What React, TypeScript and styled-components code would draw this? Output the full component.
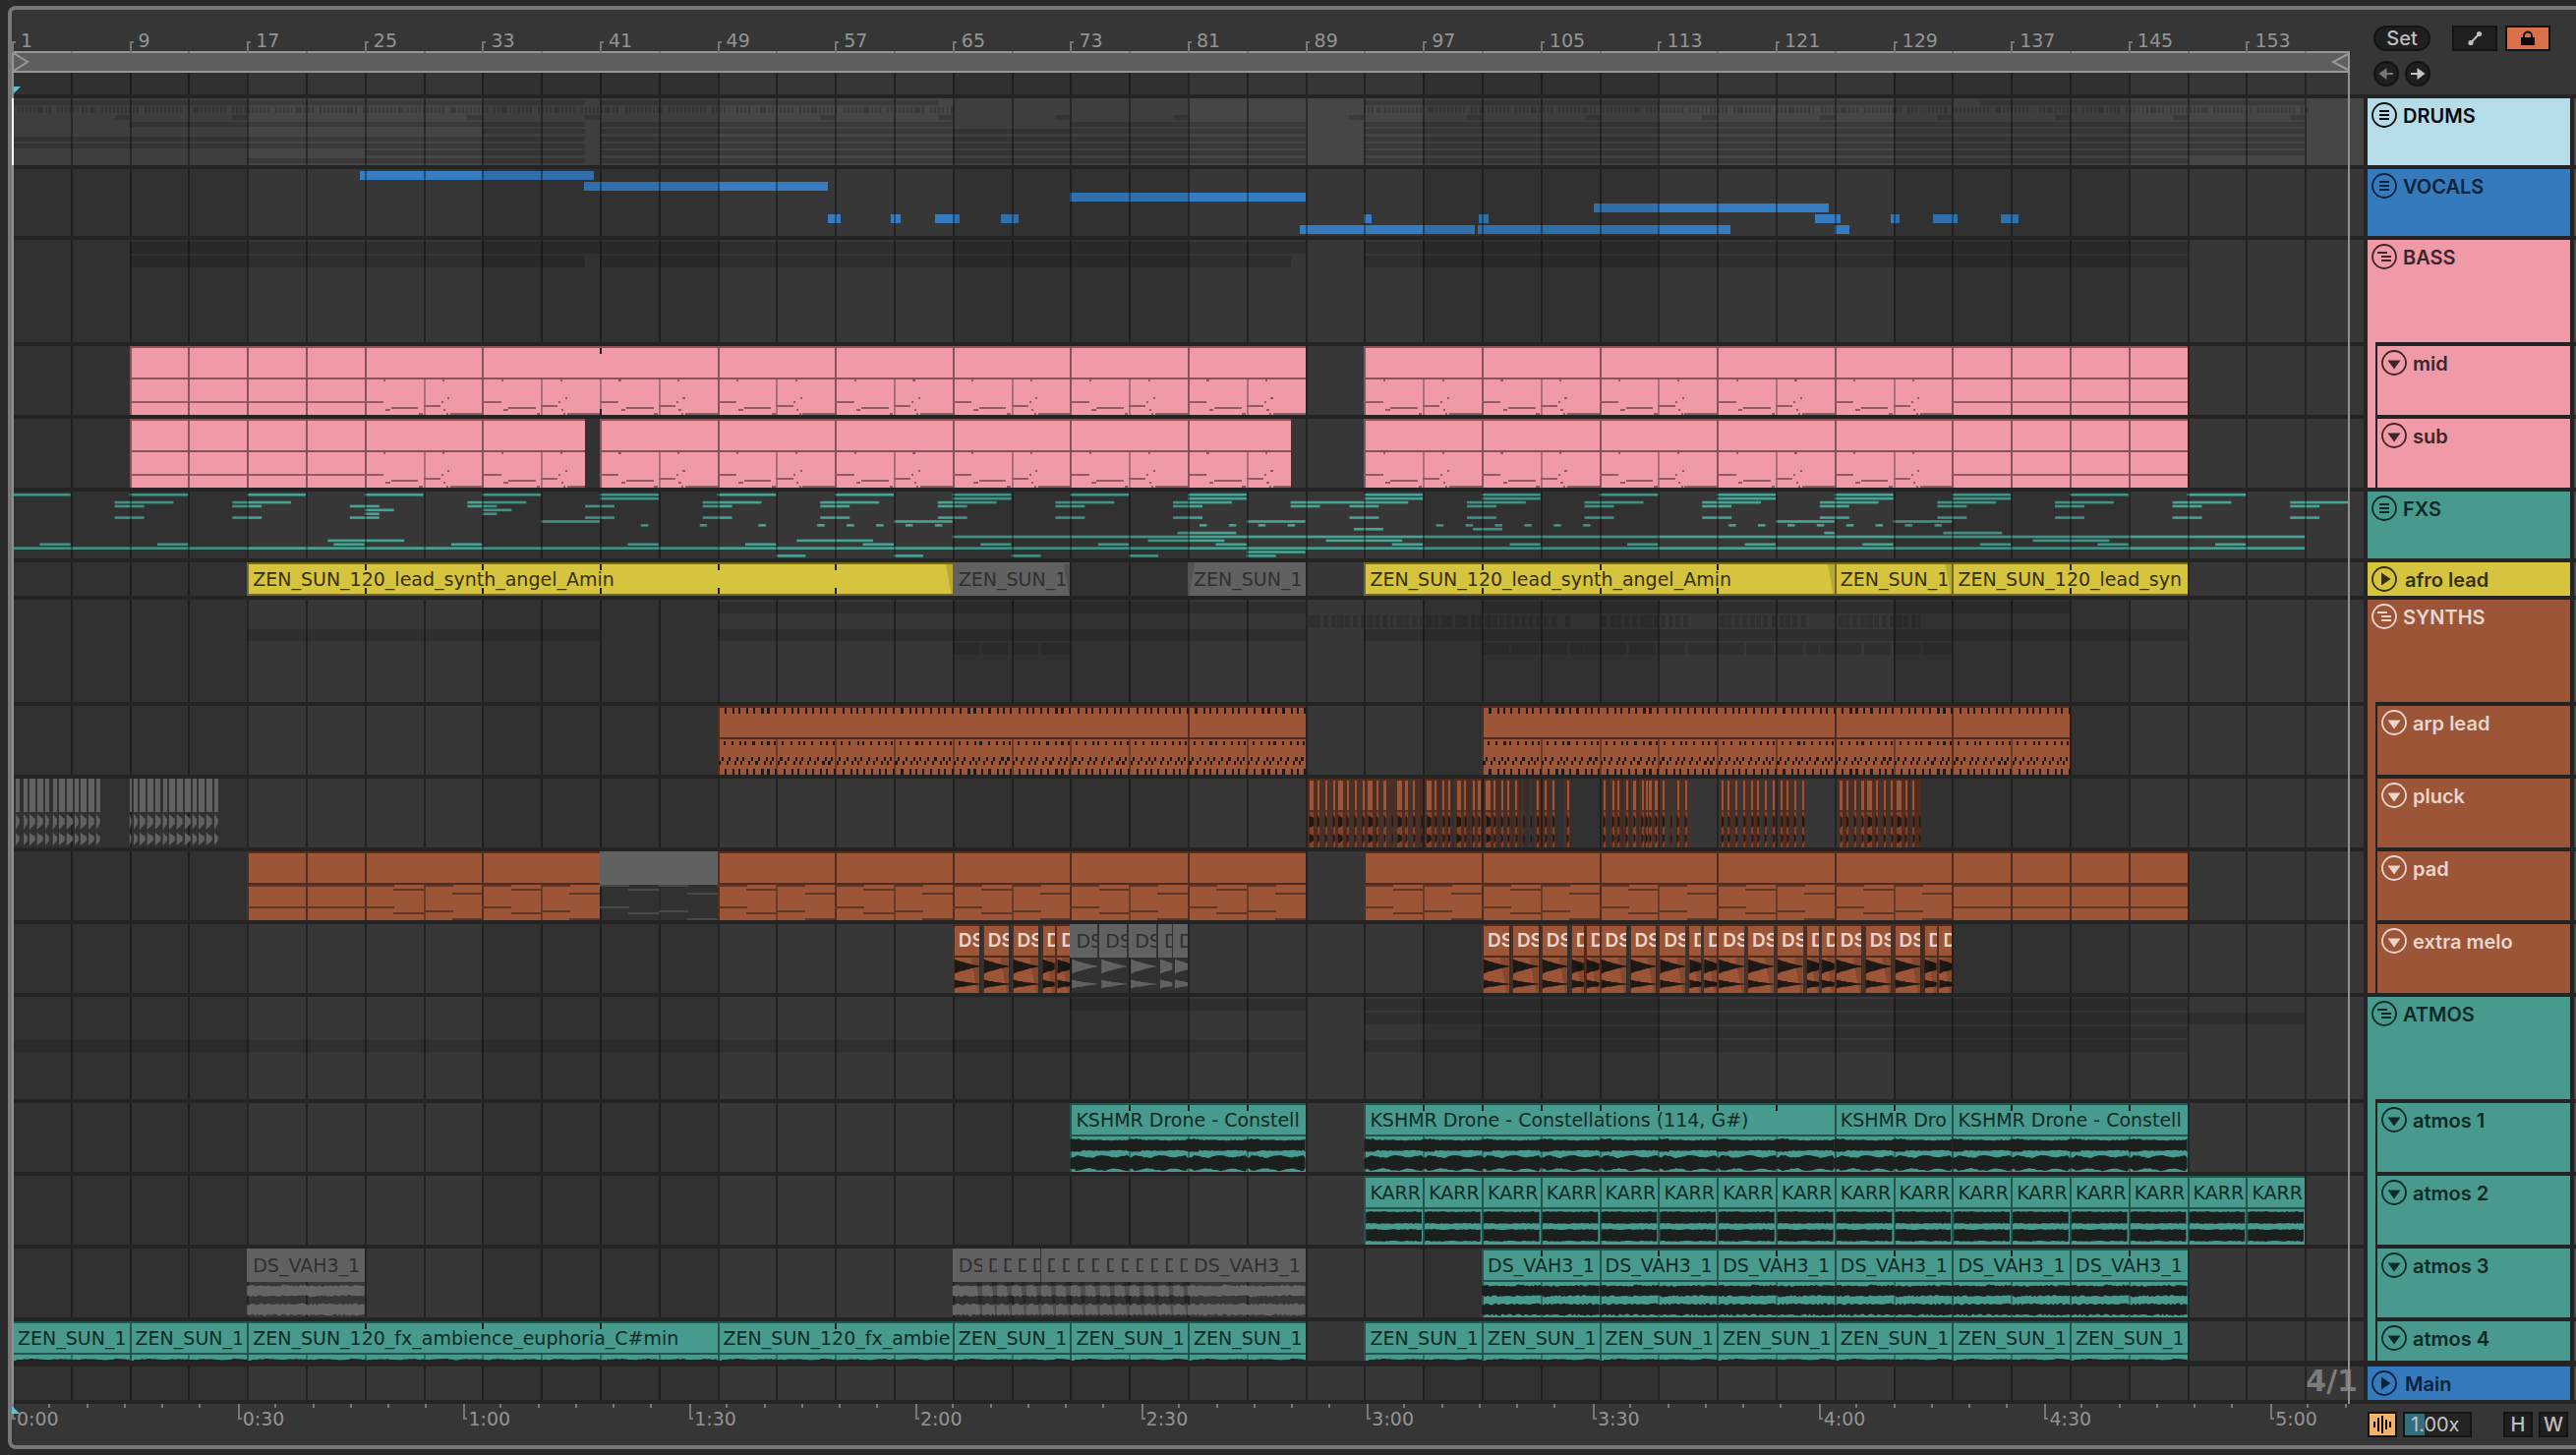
import React from 'react';
import styled, { createGlobalStyle } from 'styled-components';

const BARS = 160;
const PX = 1 / 14.95;
const FONT = '"Inter", "Liberation Sans", sans-serif';
const LABEL_FONT = '"DejaVu Sans", "Liberation Sans", sans-serif';
const pct = (bars: number) => `${(bars / BARS) * 100}%`;

type Range = [number, number];
type Tone = { fill: string; edge: string; ink: string; note: string; split: string };

const tones: Record<string, Tone> = {
  ice: { fill: '#b6dce7', edge: '#5f7880', ink: '#060a0c', note: '#333', split: '#777' },
  blue: { fill: '#357abd', edge: '#1c4268', ink: '#08233a', note: '#333', split: '#777' },
  pink: { fill: '#f09aa7', edge: '#855359', ink: '#3e2529', note: '#935c65', split: '#ac6d77' },
  teal: { fill: '#479a8d', edge: '#23554d', ink: '#0f2a26', note: '#1b201f', split: '#2f6c63' },
  gold: { fill: '#d6c43f', edge: '#74691f', ink: '#35300e', note: '#222', split: '#222' },
  rust: { fill: '#9c5537', edge: '#522c1e', ink: '#ead6cd', note: '#1f1916', split: '#6d3a26' },
};

type Clip = { from: number; to: number; label?: string; muted?: boolean; marks?: number[]; foot?: boolean; fadeIn?: boolean; fadeOut?: boolean };
type Kind = 'drums' | 'vocals' | 'bass' | 'fx' | 'synths' | 'atmos' | 'bassline' | 'arp' | 'pluck' | 'pad' | 'melo' | 'audio' | 'empty';
type Track = { name: string; tone: string; height: number; gap?: number; nested?: boolean; icon: 'lines' | 'group' | 'down' | 'play'; kind: Kind; clips?: Clip[]; wave?: 'drone' | 'karra' | 'vah' | 'thin' };

const span = (from: number, to: number, step: number, rest: Partial<Clip> = {}): Clip[] => {
  const out: Clip[] = [];
  for (let b = from; b < to; b += step) out.push({ ...rest, from: b, to: Math.min(b + step, to) });
  return out;
};
const every = (from: number, to: number, step: number) => {
  const out: number[] = [];
  for (let b = from; b < to; b += step) out.push(b);
  return out;
};

const LEAD = 'ZEN_SUN_120_lead_synth_angel_Amin';
const FX = 'ZEN_SUN_120_fx_ambience_euphoria_C#min';
const DRONE = 'KSHMR Drone - Constellations (114, G#)';
const DRONE_SHORT = 'KSHMR Drone - Constell';
const VAH = 'DS_VAH3_1';
const ZEN = 'ZEN_SUN_1';

const meloPhrase = (at: number, muted = false): Clip[] =>
  ([[0, 1.85], [2, 3.85], [4, 5.85], [6, 6.95], [7, 8]] as Range[]).map(([a, b]) => ({ from: at + a, to: at + b, label: a < 6 ? 'DS' : 'D', muted }));

const tracks: Track[] = [
  { name: 'DRUMS', tone: 'ice', height: 68, icon: 'lines', kind: 'drums' },
  { name: 'VOCALS', tone: 'blue', height: 68, icon: 'lines', kind: 'vocals' },
  { name: 'BASS', tone: 'pink', height: 104, icon: 'group', kind: 'bass' },
  {
    name: 'mid', tone: 'pink', height: 70, nested: true, icon: 'down', kind: 'bassline',
    clips: [...span(8, 24, 4), { from: 24, to: 32 }, { from: 32, to: 48, marks: [40], foot: true }, ...span(48, 88, 8), ...span(92, 132, 8), ...span(132, 148, 4)],
  },
  {
    name: 'sub', tone: 'pink', height: 70, nested: true, icon: 'down', kind: 'bassline',
    clips: [...span(8, 24, 4), { from: 24, to: 32 }, { from: 32, to: 39 }, ...span(40, 87, 8), ...span(92, 132, 8), ...span(132, 148, 4)],
  },
  { name: 'FXS', tone: 'teal', height: 68, icon: 'lines', kind: 'fx' },
  {
    name: 'afro lead', tone: 'gold', height: 34, icon: 'play', kind: 'empty',
    clips: [
      { from: 16, to: 64, label: LEAD, marks: [24, 32, 40, 48, 56], foot: true, fadeOut: true },
      { from: 64, to: 72, label: ZEN, muted: true, fadeOut: true },
      { from: 80, to: 88, label: ZEN, muted: true, fadeIn: true },
      { from: 92, to: 124, label: LEAD, marks: [100, 108, 116], foot: true, fadeOut: true },
      { from: 124, to: 132, label: ZEN, fadeOut: true },
      { from: 132, to: 148, label: 'ZEN_SUN_120_lead_syn', marks: [140], foot: true },
    ],
  },
  { name: 'SYNTHS', tone: 'rust', height: 104, icon: 'group', kind: 'synths' },
  {
    name: 'arp lead', tone: 'rust', height: 70, nested: true, icon: 'down', kind: 'arp',
    clips: [{ from: 48, to: 80 }, { from: 80, to: 88 }, { from: 100, to: 124 }, { from: 124, to: 132 }, { from: 132, to: 140 }],
  },
  { name: 'pluck', tone: 'rust', height: 70, nested: true, icon: 'down', kind: 'pluck' },
  {
    name: 'pad', tone: 'rust', height: 70, nested: true, icon: 'down', kind: 'pad',
    clips: [...span(16, 24, 4), ...span(24, 40, 8), { from: 40, to: 48, muted: true }, ...span(48, 88, 8), ...span(92, 132, 8), ...span(132, 148, 4)],
  },
  {
    name: 'extra melo', tone: 'rust', height: 70, nested: true, icon: 'down', kind: 'melo',
    clips: [...meloPhrase(64), ...meloPhrase(72, true), ...[100, 108, 116, 124].flatMap((b) => meloPhrase(b))],
  },
  { name: 'ATMOS', tone: 'teal', height: 104, icon: 'group', kind: 'atmos' },
  {
    name: 'atmos 1', tone: 'teal', height: 70, nested: true, icon: 'down', kind: 'audio', wave: 'drone',
    clips: [
      { from: 72, to: 88, label: DRONE_SHORT, marks: every(76, 88, 4) },
      { from: 92, to: 124, label: DRONE, marks: every(96, 124, 4) },
      { from: 124, to: 132, label: 'KSHMR Dro', marks: [128] },
      { from: 132, to: 148, label: DRONE_SHORT, marks: every(136, 148, 4) },
    ],
  },
  { name: 'atmos 2', tone: 'teal', height: 70, nested: true, icon: 'down', kind: 'audio', wave: 'karra', clips: span(92, 156, 4, { label: 'KARR' }) },
  {
    name: 'atmos 3', tone: 'teal', height: 70, nested: true, icon: 'down', kind: 'audio', wave: 'vah',
    clips: [
      { from: 16, to: 24, label: VAH, muted: true },
      { from: 64, to: 66, label: 'DS', muted: true },
      ...span(66, 80, 1, { label: 'D', muted: true }),
      { from: 80, to: 88, label: VAH, muted: true },
      ...every(100, 148, 8).map((b) => ({ from: b, to: b + 8, label: VAH, marks: [b + 4] })),
    ],
  },
  {
    name: 'atmos 4', tone: 'teal', height: 40, nested: true, icon: 'down', kind: 'audio', wave: 'thin',
    clips: [
      ...span(0, 16, 8, { label: ZEN }),
      { from: 16, to: 48, label: FX, marks: [24, 32, 40] },
      { from: 48, to: 64, label: 'ZEN_SUN_120_fx_ambie', marks: [56] },
      ...span(64, 88, 8, { label: ZEN }),
      ...span(92, 148, 8, { label: ZEN }),
    ],
  },
  { name: 'Main', tone: 'blue', height: 34, gap: 6, icon: 'play', kind: 'empty' },
];

/* ---------- overview data for folded groups ---------- */

const drumRows: Range[][] = [
  [[0, 39], [40, 63], [92, 132], [134, 156]],
  [],
  [7, 15, 31, 39, 55, 63, 71, 79, 91, 99, 107, 115, 123, 131, 139, 147, 155].map((b) => [b, b + 1] as Range),
  [[8, 39], [40, 64], [72, 88], [92, 156]],
  [[32, 39], [40, 88], [92, 156]],
  [[0, 39], [40, 88], [92, 156]],
  [[0, 39], [40, 88], [92, 156]],
  [[24, 39], [40, 88], [92, 156]],
  [[16, 39], [40, 88], [92, 148]],
];

const vocalRows: Range[][] = [
  [[23.7, 39.6]],
  [[38.9, 55.5]],
  [[72, 88]],
  [[107.6, 123.6]],
  [[55.5, 56.4], [59.8, 60.5], [62.8, 64.5], [67.3, 68.5], [92, 92.5], [99.8, 100.5], [122.7, 124.4], [127.8, 128.4], [130.7, 132.4], [135.3, 136.5]],
  [[87.6, 99.5], [99.7, 116.9], [124, 125]],
];

const starts = (list: number[], len: number): Range[] => list.map((b) => [b, b + len]);

const fxRows: Range[][] = [
  starts([0, 8, 16, 24, 32, 40, 48, 56, 64, 72, 80, 92, 100, 108, 116, 124, 132, 140, 148], 4),
  starts([40, 64, 80, 92, 100, 116, 124, 132], 4),
  [...starts([7, 15, 31, 47, 55, 63, 71, 79, 99, 107, 115, 123, 131, 139, 147, 155], 4), [87, 95]],
  starts([7, 15, 23, 31, 39, 47, 55, 63, 71, 79, 87, 91, 99, 107, 115, 123, 131, 139, 147, 155], 2),
  starts([24, 32], 2),
  starts([24, 32], 1),
  starts([7, 15, 23, 39, 47, 55, 63, 71, 79, 91, 99, 107, 115, 123, 131, 139, 147, 155], 2),
  starts([36, 60, 84, 120, 128], 4),
  starts([42.8, 46.8, 50.8, 54.8, 56.8, 58.8, 60.8, 62.8, 80.8, 82.8, 84.8, 86.8, 96.9, 98.9, 100.9, 102.9, 104.9, 106.9, 116.8, 118.8, 120.8, 122.8, 124.8, 126.8, 128.8, 130.8], 0.5),
  starts([91.3, 99.4], 2),
  [[79.3, 83.3], [123.3, 124], [131.4, 135.4]],
  [[64, 156]],
  starts([21.5, 53.4, 77.3, 89.4, 137.5], 5.2),
  starts([1.9, 9.9, 21.9, 29.9, 41.9, 49.9, 57.9, 65.9, 73.9, 81.9, 93.9, 101.9, 109.9, 117.9, 125.9, 133.9, 141.9, 149.9], 2.1),
  [[0, 156]],
  [[84, 88]],
  starts([52, 60, 68, 76, 84], 2),
];

const wide = 0.3;
const thin = 0.14;
type Hit = [number, number];
const pluckHits: Hit[] = [
  ...([[0.15, wide], [0.69, thin], [1.22, thin], [1.76, thin], [2.12, wide], [2.69, thin], [3.22, thin], [3.76, thin], [4.15, wide], [4.69, thin], [5.22, thin], [5.76, 0], [6.15, wide], [6.69, thin], [7.22, thin], [7.76, 0], [8.15, wide], [8.69, thin], [9.22, thin], [9.6, thin], [10.18, wide], [10.7, thin], [11.25, thin], [11.64, thin], [12.18, wide], [12.7, thin], [13.2, thin], [13.64, thin], [14.18, thin], [14.7, 0], [15.2, 0], [15.64, thin], [16.18, thin], [16.7, thin], [17.67, thin]] as Hit[]).map(([b, w]) => [88.12 + b, w] as Hit),
  ...([0.27, 0.87, 1.25, 1.8, 2.33, 2.87, 3.15, 3.4, 3.8, 4.3, 4.85, 5.28, 5.82]).map((b) => [108 + b, b === 4.85 ? 0 : thin] as Hit),
  ...([0.27, 0.69, 1.22, 1.76, 2.3, 2.69, 3.2, 3.76, 4.3, 4.7, 5.2, 5.76]).map((b) => [116.05 + b, thin] as Hit),
  ...([[0.33, thin], [0.75, thin], [1.28, thin], [1.8, thin], [2.2, wide], [2.75, thin], [3.3, thin], [3.8, thin], [4.2, wide], [4.75, thin], [5.27, thin], [5.7, 0]] as Hit[]).map(([b, w]) => [124.05 + b, w] as Hit),
];
const mutedPlucks = ([
  [0.13, 0.39], [0.68, 0.94], [1.07, 1.46], [1.59, 2], [2.14, 2.4], [2.66, 2.95], [3.08, 3.47], [3.6, 4.02], [4.15, 4.41], [4.54, 4.96], [5.09, 5.48], [5.61, 5.87],
  [7.88, 8], [8.17, 8.43], [8.56, 8.95], [9.08, 9.5], [9.63, 10], [10.15, 10.44], [10.57, 10.96], [11.09, 11.5], [11.64, 12.03], [12.16, 12.45], [12.58, 12.97], [13.1, 13.5], [13.65, 13.9],
] as Range[]).map(([a, b]): Range => [a + 0.13, b + 0.13]);

/* ---------- wave forms ---------- */

const noise = (n: number) => {
  const s = Math.sin(n * 127.1 + 11.7) * 43758.5453;
  return s - Math.floor(s);
};

const wavePath = (from: number, to: number, mid: number, amp: (t: number, i: number) => number, step = 0.14) => {
  const up: string[] = [];
  const down: string[] = [];
  const n = Math.max(2, Math.round((to - from) / step));
  for (let i = 0; i <= n; i += 1) {
    const x = (from + ((to - from) * i) / n).toFixed(2);
    const t = ((to - from) * i) / n;
    up.push(`${x} ${(mid - amp(t, i)).toFixed(1)}`);
    down.unshift(`${x} ${(mid + amp(t, i + 500)).toFixed(1)}`);
  }
  return `M${up.join('L')}L${down.join('L')}Z`;
};

const audioWaves = (kind: Track['wave'], from: number, to: number) => {
  if (kind === 'drone')
    return (
      wavePath(from, to, 43, (t, i) => 4.6 + (t % 4 < 0.8 ? 1.2 : 0) + noise(i % 28) * 1.2) +
      wavePath(from, to, 61, (t, i) => 6 + Math.sin((t % 4) * 3.6) * 1.2 + (t % 4 < 0.3 ? -1.5 : 0) + noise((i % 28) + 70) * 1.2)
    );
  if (kind === 'karra')
    return wavePath(from + 0.12, to - 0.08, 42.5, (_, i) => 5.4 + noise((i % 28) + 5)) + wavePath(from + 0.12, to - 0.08, 60.5, (_, i) => 5.4 + noise((i % 28) + 90));
  if (kind === 'thin') return wavePath(from + 0.3, to, 41, (t, i) => 1.3 + Math.abs(Math.sin(t * 1.57)) * 0.9 + noise(i) * 0.8);
  return wavePath(from, to, 43, (_, i) => 4.2 + noise((i % 57) + 31) * 2.2) + wavePath(from, to, 62, (_, i) => 4.4 + noise((i % 57) + 140) * 2.2);
};

/* ---------- styles ---------- */

const Global = createGlobalStyle`
  *, *::before, *::after { box-sizing: border-box; }
  body { margin: 0; background: #2a2a2a; font-family: ${FONT}; }
  button, input { font: inherit; }
`;

const Page = styled.main`
  min-height: 100vh;
  padding: 6px 0 6px 8px;
  background: #2a2a2a;
`;
const Frame = styled.div`
  display: flex;
  border: 4px solid #777;
  border-right: 0;
  border-radius: 8px 0 0 8px;
  background: #363636;
  overflow: hidden;
`;
const Arrangement = styled.section`
  position: relative;
  flex: 1;
  min-width: 0;
`;
const Side = styled.aside`
  width: 216px;
  flex: none;
`;

const BarRuler = styled.div`
  display: grid;
  grid-template-columns: repeat(20, 1fr);
  height: 42px;
`;
const BarCell = styled.div`
  position: relative;
  padding: 18px 0 0 9px;
  color: #939393;
  font-family: ${LABEL_FONT};
  font-size: 19px;
  line-height: 26px;
  &::before {
    content: '';
    position: absolute;
    left: 0;
    bottom: 0;
    width: 4px;
    height: 12px;
    border-left: 2px solid #777;
    border-top: 2px solid #777;
  }
  &::after {
    content: '';
    position: absolute;
    left: 50%;
    bottom: 0;
    width: 2px;
    height: 2px;
    background: #777;
  }
`;
const Loop = styled.div`
  display: flex;
  justify-content: space-between;
  width: ${pct(159.06)};
  height: 22px;
  border: 2px solid #979797;
  background: #5e5e5e;
  svg { width: 18px; height: 18px; }
`;
const LoopEdge = styled.div<{ $at: number }>`
  position: absolute;
  left: ${(p) => pct(p.$at)};
  top: 64px;
  bottom: 42px;
  width: 2px;
  background: #909090;
  z-index: 3;
`;
const Scrub = styled.div`
  position: relative;
  height: 22px;
`;
const Marker = styled.svg`
  position: absolute;
  left: 0;
  width: 10px;
  height: 8px;
  z-index: 4;
`;
const ScrubMarker = styled(Marker)`bottom: 0; left: 2px;`;
const TimeMarker = styled(Marker)`top: 2px;`;

const Lane = styled.div<{ $height: number; $gap: number; $lit?: boolean }>`
  position: relative;
  height: ${(p) => p.$height + p.$gap}px;
  border-top: ${(p) => p.$gap}px solid #242424;
  background: ${(p) => (p.$lit ? '#464646' : '#373737')};
`;
const Canvas = styled.svg`
  position: absolute;
  inset: 0;
  width: 100%;
  height: 100%;
  pointer-events: none;
`;
const Cursor = styled.div`
  position: absolute;
  left: 0;
  top: 0;
  bottom: 0;
  width: 2px;
  background: #fff;
  z-index: 4;
`;
const ClipBox = styled.div<{ $tone: Tone; $muted?: boolean }>`
  position: absolute;
  top: 0;
  bottom: 0;
  overflow: hidden;
  background: ${(p) => (p.$muted ? 'transparent' : p.$tone.fill)};
  border-left: ${(p) => (p.$muted ? '0' : `2px solid ${p.$tone.edge}`)};
`;
const ClipTitle = styled.div<{ $tone: Tone; $muted?: boolean; $bold?: boolean }>`
  height: 34px;
  padding-left: ${(p) => (p.$muted ? 6 : 4)}px;
  border: 2px solid ${(p) => (p.$muted ? '#616161' : p.$tone.edge)};
  border-width: 2px 0;
  background: ${(p) => (p.$muted ? '#616161' : p.$tone.fill)};
  color: ${(p) => (p.$muted ? '#2f2f2f' : p.$tone.ink)};
  font-family: ${(p) => (p.$bold ? FONT : LABEL_FONT)};
  font-size: 19px;
  font-weight: ${(p) => (p.$bold ? 600 : 400)};
  line-height: 30px;
  white-space: nowrap;
  overflow: hidden;
`;
const Position = styled.output`
  position: absolute;
  right: 6px;
  bottom: 48px;
  color: #7b7b7b;
  font-family: ${LABEL_FONT};
  font-size: 30px;
  font-weight: 700;
  line-height: 34px;
  z-index: 2;
`;

const TimeRuler = styled.div`
  position: relative;
  display: flex;
  height: 42px;
  overflow: hidden;
`;
const TimeCell = styled.div`
  position: relative;
  flex: none;
  width: ${pct(15.366)};
  padding: 2px 0 0 5px;
  color: #939393;
  font-family: ${LABEL_FONT};
  font-size: 19px;
  line-height: 26px;
`;
const BaseLine = styled.div`
  height: 4px;
  background: #242424;
`;

const Tools = styled.div`
  display: grid;
  grid-template-columns: 58px 100px;
  grid-template-rows: 26px 26px;
  column-gap: 22px;
  row-gap: 10px;
  height: 86px;
  padding: 16px 0 0 10px;
`;
const Pair = styled.div`
  display: flex;
  gap: 8px;
`;
const Arrows = styled.div`
  display: flex;
  gap: 6px;
`;
const Tool = styled.button<{ $width: number; $round?: boolean; $fill?: string }>`
  display: flex;
  align-items: center;
  justify-content: center;
  flex: none;
  width: ${(p) => p.$width}px;
  height: 26px;
  padding: 0;
  border: 2px solid #131313;
  border-radius: ${(p) => (p.$round ? 13 : 0)}px;
  background: ${(p) => p.$fill ?? '#1f1f1f'};
  color: #bdbdbd;
  font-size: 20px;
  font-weight: 500;
  line-height: 22px;
`;

const HeaderRow = styled.div<{ $height: number; $gap: number }>`
  display: flex;
  height: ${(p) => p.$height + p.$gap}px;
  padding-left: 4px;
  background: #242424;
`;
const Strip = styled.div<{ $tone: Tone }>`
  width: 10px;
  border-right: 2px solid #242424;
  background: ${(p) => p.$tone.fill};
`;
const Header = styled.div<{ $tone: Tone; $gap: number; $wideGap?: boolean }>`
  display: flex;
  align-items: flex-start;
  gap: ${(p) => (p.$wideGap ? 8 : 6)}px;
  flex: 1;
  margin-top: ${(p) => p.$gap}px;
  padding: 4px;
  background: ${(p) => p.$tone.fill};
  color: ${(p) => p.$tone.ink};
  font-size: 20px;
  font-weight: 600;
  line-height: 28px;
`;
const Next = styled.div<{ $gap: number }>`
  width: 2px;
  margin: ${(p) => p.$gap}px 0 0 4px;
  background: #464646;
`;
const Fold = styled.button`
  width: 26px;
  height: 26px;
  flex: none;
  padding: 0;
  border: 0;
  background: none;
  color: inherit;
  svg { display: block; width: 26px; height: 26px; }
`;

const Status = styled.div`
  display: flex;
  align-items: flex-start;
  height: 42px;
  padding: 8px 8px 0 4px;
`;
const Speed = styled.label`
  display: flex;
  width: 70px;
  height: 26px;
  margin: 0 32px 0 6px;
  border: 2px solid #131313;
  background: linear-gradient(to right, #336f7e 20px, #242424 20px);
  input {
    width: 100%;
    padding: 0 0 0 6px;
    border: 0;
    outline: 0;
    background: none;
    color: #c4c4c4;
    font-size: 20px;
    line-height: 22px;
  }
`;
const Gap = styled.span`width: 6px;`;

/* ---------- drawings ---------- */

const FoldIcon = ({ kind }: { kind: Track['icon'] }) => (
  <svg viewBox="0 0 26 26" fill="none" stroke="currentColor" strokeWidth="2" aria-hidden="true">
    <circle cx="13" cy="13" r="12" strokeWidth="1.8" />
    {kind === 'lines' && <path d="M8 9h10M8 13h10M8 17h10" />}
    {kind === 'group' && <path d="M6 9h10M10 13h10M10 17h10" />}
    {kind === 'down' && <path d="M6.5 10.5h13L13 19.5z" fill="currentColor" stroke="none" />}
    {kind === 'play' && <path d="M10 6.5v13L19.5 13z" fill="currentColor" stroke="none" />}
  </svg>
);

const gridLines = every(4, 160, 4).map((b) => `M${(b + PX).toFixed(3)} 0V1`).join('');
const Grid = () => (
  <Canvas viewBox="0 0 160 1" preserveAspectRatio="none" shapeRendering="crispEdges" aria-hidden="true">
    {every(0, 160, 32).map((b) => (
      <rect key={b} x={b} y="0" width="16" height="1" fill="#000" opacity="0.1" />
    ))}
    <path d={gridLines} stroke="#000" strokeOpacity="0.36" strokeWidth="2" vectorEffect="non-scaling-stroke" />
  </Canvas>
);

type RowsProps = { rows: Range[][]; top: number; pitch: number; size: number; fill: string; opacity?: number };
const Rows = ({ rows, top, pitch, size, fill, opacity = 1 }: RowsProps) => (
  <g fill={fill} opacity={opacity}>
    {rows.flatMap((row, r) => row.map(([a, b]) => <rect key={`${r}-${a}`} x={a} y={top + r * pitch} width={b - a} height={size} />))}
  </g>
);

const drumTicks = [...every(0.4, 64, 0.27), ...every(92, 156, 0.27)].map((b, i): Range => [b, b + (i % 13 === 5 ? 0.27 : 0.13)]).filter((_, i) => i % 11 !== 9);

const meloMap: Range[] = [64, 100, 108, 116, 124].flatMap((at) => meloPhrase(at).map((c): Range => [c.from, c.to]));

const Overview = ({ kind }: { kind: Kind }) => {
  if (kind === 'drums')
    return (
      <>
        <Rows rows={drumRows} top={2} pitch={7.35} size={5} fill="#000" opacity={0.16} />
        <Rows rows={[drumTicks]} top={9} pitch={0} size={6} fill="#000" opacity={0.16} />
      </>
    );
  if (kind === 'vocals') return <Rows rows={vocalRows} top={2} pitch={11} size={9} fill="#357cc0" />;
  if (kind === 'bass') return <Rows rows={[[[8, 88], [92, 148]], [[8, 39], [40, 87], [92, 148]]]} top={2} pitch={14} size={12} fill="#000" opacity={0.15} />;
  if (kind === 'fx') return <Rows rows={fxRows} top={2} pitch={3.88} size={2.6} fill="#49a395" />;
  if (kind === 'synths')
    return (
      <Rows
        rows={[[[48, 88], [100, 140]], pluckHits.map(([b, w]): Range => [b - 0.1, b + w + 0.1]), [[16, 40], [48, 88], [92, 148]], meloMap]}
        top={2} pitch={14} size={12} fill="#000" opacity={0.14}
      />
    );
  if (kind === 'atmos') return <Rows rows={[[[72, 88], [92, 148]], [[92, 156]], [[100, 148]], [[0, 88], [92, 148]]]} top={2} pitch={14} size={12} fill="#000" opacity={0.14} />;
  return null;
};

type Note = [number, number, number];
const bassNotes: Note[] = [[0, 1.3, 56], [1.3, 0.14, 34], [1.45, 0.3, 64], [1.8, 1.85, 62], [3.7, 0.25, 68], [4, 1.15, 60], [5.2, 0.14, 56], [5.3, 0.14, 34], [5.65, 0.14, 52], [5.38, 0.14, 64], [5.55, 0.14, 68], [5.8, 2.2, 68]];
const padNotes: Note[] = [[0, 2, 34], [0, 2, 56], [1.95, 2.05, 38], [1.95, 2.05, 62], [4, 2, 34], [4, 2, 60], [5.95, 2.05, 42], [5.95, 2.05, 68]];

const Phrase = ({ clip, notes, flat, color, split }: { clip: Clip; notes: Note[]; flat: number[]; color: string; split: string }) => {
  const length = clip.to - clip.from;
  if (length <= 4) return <>{flat.map((y) => <rect key={y} x={clip.from + 2 * PX} y={y} width={length - 2 * PX} height="2" fill={color} />)}</>;
  return (
    <>
      {every(clip.from, clip.to, 8).map((at) => (
        <g key={at} fill={color}>
          <rect x={at + 4} y="34" width={2 * PX} height="36" fill={split} />
          {at > clip.from && <rect x={at} y="34" width={2 * PX} height="36" fill={split} />}
          {notes.filter(([x]) => at + x < clip.to).map(([x, w, y]) => (
            <rect key={`${x}-${y}`} x={at + x} y={y} width={Math.min(w, clip.to - at - x)} height="2" />
          ))}
        </g>
      ))}
    </>
  );
};

const arpHead = [0.5, 1.05, 1.45, 1.95, 2.45, 3, 3.4, 3.92];
const arpTop = [0.4, 0.95, 1.5, 1.85, 2.4, 2.95, 3.4, 3.82];
const arpLow = [0.1, 0.6, 1.15, 1.55, 2.1, 2.6, 3.15, 3.55];
const tick = (b: number, y: number, h: number) => `M${b.toFixed(2)} ${y}h0.14v${h}h-0.14z`;
const arpPath = (from: number, to: number) =>
  every(from, to, 4)
    .map((at) => [
      ...arpHead.map((b) => tick(at + b, 2, 6) + tick(at + b, 64, 6)),
      ...arpTop.map((b) => tick(at + b, 36, 4)),
      ...arpLow.map((b) => tick(at + b, 56, 4) + tick(at + b + 0.17, 52, 4)),
    ].join(''))
    .join('');

const decay = (from: number, to: number) => {
  const amp = (peak: number) => (t: number, i: number) => Math.max(0.6, peak * Math.pow(Math.max(0, 1 - t / 1.75), 1.3) + noise(i) * 0.5);
  return wavePath(from + 2 * PX, to, 43, amp(7)) + wavePath(from + 2 * PX, to, 61, amp(4));
};

const Detail = ({ track }: { track: Track }) => {
  const tone = tones[track.tone];
  const clips = track.clips ?? [];
  const marks = clips.flatMap((c) => (c.marks ?? []).map((m) => ({ m, foot: c.foot })));
  return (
    <Canvas viewBox={`0 0 160 ${track.height}`} preserveAspectRatio="none" aria-hidden="true">
      <g shapeRendering="crispEdges">
        {track.kind === 'bassline' && clips.map((c) => <Phrase key={c.from} clip={c} notes={bassNotes} flat={[56]} color={tone.note} split={tone.split} />)}
        {track.kind === 'pad' &&
          clips.map((c) => <Phrase key={c.from} clip={c} notes={padNotes} flat={[34, 56]} color={c.muted ? '#484848' : '#633525'} split={c.muted ? '#282828' : tone.split} />)}
        {track.kind === 'arp' &&
          clips.map((c) => (
            <g key={c.from}>
              {every(c.from + 4, c.to, 4).map((b) => <rect key={b} x={b} y="34" width={2 * PX} height="36" fill={tone.split} />)}
              <path d={arpPath(c.from, c.to)} fill={tone.note} />
            </g>
          ))}
        {track.kind === 'pluck' && (
          <>
            {mutedPlucks.map(([a, b]) => <rect key={a} x={a} y="0" width={b - a} height="34" fill="#616161" />)}
            {pluckHits.map(([b, w]) => <rect key={b} x={b - 0.14} y="0" width={w + 0.22} height="70" fill={tone.edge} />)}
            {pluckHits.map(([b, w]) => (
              <g key={b}>
                <rect x={b} y="2" width={w} height="30" fill={tone.fill} />
                <rect x={b} y="34" width={w} height="36" fill="#84422a" />
              </g>
            ))}
          </>
        )}
        {track.kind === 'audio' &&
          clips.filter((c) => !c.muted).flatMap((c) => every(c.from + 4, c.to, 4).map((b) => <rect key={b} x={b} y="34" width={2 * PX} height={track.height - 34} fill={tone.split} />))}
      </g>
      {track.kind === 'pluck' && (
        <>
          {pluckHits.map(([b, w]) => (
            <path key={b} d={`M${b} 37l${w || 0.1} 3v8l-${w || 0.1} 2zM${b} 56l${w || 0.1} 2v5l-${w || 0.1} 3z`} fill={tone.note} />
          ))}
          {mutedPlucks.map(([a, b]) => (
            <path key={a} d={`M${a} 36L${b} 41V46L${a} 52zM${a} 55L${b} 59V63L${a} 68z`} fill="#616161" />
          ))}
        </>
      )}
      {track.kind === 'melo' && clips.map((c) => <path key={c.from} d={decay(c.from, c.to)} fill={c.muted ? '#616161' : tone.note} />)}
      {track.kind === 'melo' &&
        clips.filter((c) => !c.muted).map((c) => <path key={c.from} d={`M${c.to - 0.6} 34H${c.to}V70H${c.to - 0.15}z`} fill="#000" opacity="0.15" />)}
      {track.kind === 'audio' && clips.map((c) => <path key={c.from} d={audioWaves(track.wave, c.from, c.to)} fill={c.muted ? '#656565' : tone.note} />)}
      {track.wave === 'vah' &&
        clips.filter((c) => c.muted && c.to - c.from < 3).map((c) => <path key={c.from} d={`M${c.to - 0.35} 34H${c.to}V70H${c.to - 0.1}z`} fill="#000" opacity="0.22" />)}
      {clips.filter((c) => c.fadeOut).map((c) => <path key={c.from} d={`M${c.to - 0.45} 2H${c.to}V32H${c.to - 0.1}z`} fill="#000" opacity="0.14" />)}
      {clips.filter((c) => c.fadeIn).map((c) => <path key={c.from} d={`M${c.from} 0H${c.from + 0.5}L${c.from + 0.1} 34H${c.from}z`} fill="#000" opacity="0.14" />)}
      <g fill="#1d1d1b" shapeRendering="crispEdges">
        {marks.map(({ m, foot }) => (
          <React.Fragment key={m}>
            <rect x={m} y="2" width={2 * PX} height="6" />
            {foot && <rect x={m} y={track.height < 40 ? 26 : track.height - 6} width={2 * PX} height="6" />}
          </React.Fragment>
        ))}
      </g>
    </Canvas>
  );
};

const LaneView = ({ track }: { track: Track }) => (
  <Lane $height={track.height} $gap={track.gap ?? 4} $lit={track.kind === 'drums'}>
    <Canvas viewBox={`0 0 160 ${track.height}`} preserveAspectRatio="none" shapeRendering={track.kind === 'fx' ? 'auto' : 'crispEdges'} aria-hidden="true">
      <Overview kind={track.kind} />
    </Canvas>
    <Grid />
    {track.clips?.map((clip) => (
      <ClipBox key={clip.from} $tone={tones[track.tone]} $muted={clip.muted} style={{ left: pct(clip.from), width: pct(clip.to - clip.from) }}>
        <ClipTitle $tone={tones[track.tone]} $muted={clip.muted} $bold={track.tone === 'rust' && !clip.muted}>{clip.label}</ClipTitle>
      </ClipBox>
    ))}
    <Detail track={track} />
    {track.kind === 'drums' && <Cursor />}
  </Lane>
);

const timeLabel = (i: number) => `${Math.floor(i / 2)}:${i % 2 ? '30' : '00'}`;
const TimeTicks = () => (
  <Canvas viewBox="0 0 6 42" preserveAspectRatio="none" shapeRendering="crispEdges" aria-hidden="true">
    <path d="M1 0V4M2 0V4M3 0V4M4 0V4M5 0V4" stroke="#777" strokeWidth="2" vectorEffect="non-scaling-stroke" />
    <path d="M0.026 0V16M0 15H0.1" stroke="#777" strokeWidth="2" vectorEffect="non-scaling-stroke" />
  </Canvas>
);

export default function App() {
  return (
    <>
      <Global />
      <Page>
        <Frame>
          <Arrangement aria-label="Arrangement">
            <BarRuler>
              {every(1, 160, 8).map((bar) => <BarCell key={bar}>{bar}</BarCell>)}
            </BarRuler>
            <Loop>
              <svg viewBox="0 0 18 18" fill="none" stroke="#979797" strokeWidth="2" aria-hidden="true"><path d="M0 0L14 9L0 18" /></svg>
              <svg viewBox="0 0 18 18" fill="none" stroke="#979797" strokeWidth="2" aria-hidden="true"><path d="M18 1L3 9L18 17" /></svg>
            </Loop>
            <Scrub>
              <Grid />
              <ScrubMarker viewBox="0 0 10 8" aria-hidden="true"><path d="M0 0H7L0 7z" fill="#5ec3d6" /></ScrubMarker>
            </Scrub>
            {tracks.map((t) => <LaneView key={t.name} track={t} />)}
            <BaseLine />
            <TimeRuler>
              {every(0, 11, 1).map((i) => (
                <TimeCell key={i}>
                  <TimeTicks />
                  {timeLabel(i)}
                </TimeCell>
              ))}
              <TimeMarker viewBox="0 0 10 8" aria-hidden="true"><path d="M0 0L8 8H0z" fill="#5ec3d6" /></TimeMarker>
            </TimeRuler>
            <LoopEdge $at={0} />
            <LoopEdge $at={158.93} />
            <Position>4/1</Position>
          </Arrangement>
          <Side aria-label="Tracks">
            <Tools>
              <Tool type="button" $width={58} $round>Set</Tool>
              <Pair>
                <Tool type="button" $width={46} aria-label="Automation mode">
                  <svg width="18" height="18" viewBox="0 0 18 18" fill="#bdbdbd" stroke="#bdbdbd" aria-hidden="true">
                    <circle cx="5" cy="13.5" r="2.6" stroke="none" />
                    <circle cx="13.5" cy="4.5" r="2.6" stroke="none" />
                    <path d="M5 13.5L13.5 4.5" strokeWidth="2" />
                  </svg>
                </Tool>
                <Tool type="button" $width={46} $fill="#da714c" aria-label="Lock envelopes">
                  <svg width="14" height="16" viewBox="0 0 14 16" aria-hidden="true">
                    <path d="M0 7h14v8H0z" fill="#0c0c0c" />
                    <path d="M3 8V5.5a4 4 0 0 1 8 0V8" fill="none" stroke="#0c0c0c" strokeWidth="2" />
                  </svg>
                </Tool>
              </Pair>
              <Arrows>
                <Tool type="button" $width={26} $round aria-label="Previous locator">
                  <svg width="16" height="14" viewBox="0 0 16 14" fill="#777" aria-hidden="true"><path d="M0.5 7L8.5 1V6H15V8H8.5V13z" /></svg>
                </Tool>
                <Tool type="button" $width={26} $round aria-label="Next locator">
                  <svg width="16" height="14" viewBox="0 0 16 14" fill="#c4c4c4" aria-hidden="true"><path d="M15.5 7L7.5 1V6H1V8H7.5V13z" /></svg>
                </Tool>
              </Arrows>
            </Tools>
            {tracks.map((t) => {
              const gap = t.gap ?? 4;
              return (
                <HeaderRow key={t.name} $height={t.height} $gap={gap}>
                  {t.nested && <Strip $tone={tones[t.tone]} />}
                  <Header $tone={tones[t.tone]} $gap={gap} $wideGap={t.icon === 'play'}>
                    <Fold type="button" aria-label={`Fold ${t.name}`}><FoldIcon kind={t.icon} /></Fold>
                    <span>{t.name}</span>
                  </Header>
                  <Next $gap={gap} />
                </HeaderRow>
              );
            })}
            <BaseLine />
            <Status>
              <Tool type="button" $width={30} $fill="#f4b368" aria-label="Waveform zoom">
                <svg width="20" height="20" viewBox="0 0 20 20" stroke="#0c0c0c" strokeWidth="2" aria-hidden="true">
                  <path d="M2 7v6M6 3v14M10 1v18M14 5v10M18 7v6" />
                </svg>
              </Tool>
              <Speed>
                <input aria-label="Zoom factor" defaultValue="1.00x" />
              </Speed>
              <Tool type="button" $width={30}>H</Tool>
              <Gap />
              <Tool type="button" $width={30}>W</Tool>
            </Status>
          </Side>
        </Frame>
      </Page>
    </>
  );
}
